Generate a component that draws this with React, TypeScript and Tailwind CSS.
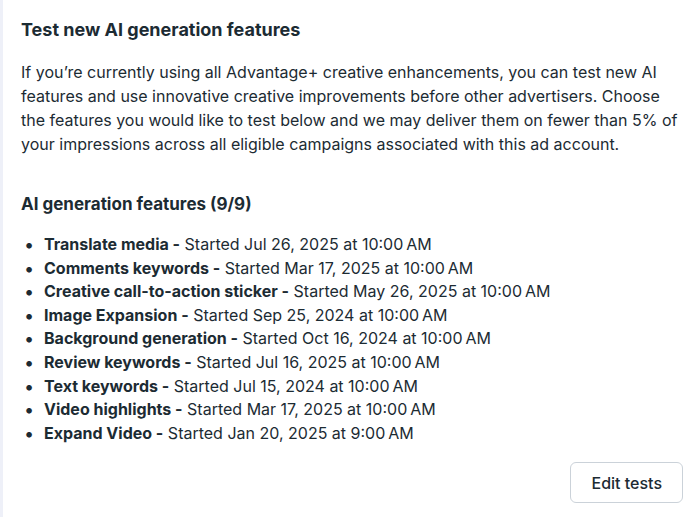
const features = [
  { name: 'Translate media', date: 'Jul 26, 2025 at 10:00\u202FAM' },
  { name: 'Comments keywords', date: 'Mar 17, 2025 at 10:00\u202FAM' },
  { name: 'Creative call-to-action sticker', date: 'May 26, 2025 at 10:00\u202FAM' },
  { name: 'Image Expansion', date: 'Sep 25, 2024 at 10:00\u202FAM' },
  { name: 'Background generation', date: 'Oct 16, 2024 at 10:00\u202FAM' },
  { name: 'Review keywords', date: 'Jul 16, 2025 at 10:00\u202FAM' },
  { name: 'Text keywords', date: 'Jul 15, 2024 at 10:00\u202FAM' },
  { name: 'Video highlights', date: 'Mar 17, 2025 at 10:00\u202FAM' },
  { name: 'Expand Video', date: 'Jan 20, 2025 at 9:00\u202FAM' },
]

export default function App() {
  return (
    <div className="flex min-h-[517px] w-[700px] bg-white text-[#1c2b33]" style={{ fontFamily: 'Inter, "Noto Sans", sans-serif' }}>
      <div className="w-[3px] shrink-0 bg-[#eef0f8]" />
      <div className="flex-1 pl-[18px] pr-[17px] pt-[18px]">
        <h2 className="text-[18px] font-bold leading-6">Test new AI generation features</h2>
        <p className="mt-[18px] text-[16px] leading-6">
          If you’re currently using all Advantage+ creative enhancements, you can test new AI features and use
          innovative creative improvements before other advertisers. Choose the features you would like to test below
          and we may deliver them on fewer than 5% of your impressions across all eligible campaigns associated with
          this ad account.
        </p>

        <h3 className="mt-[36px] text-[17px] font-bold leading-6">AI generation features (9/9)</h3>
        <ul className="mt-[17px] text-[16px] leading-[23.6px]">
          {features.map((f) => (
            <li key={f.name} className="flex items-center">
              <span className="w-[23px] pl-[3px] text-[18px]">•</span>
              <span>
                <span className="font-bold">{f.name} -</span> Started {f.date}
              </span>
            </li>
          ))}
        </ul>

        <div className="mt-[17px] flex justify-end">
          <button className="h-[41px] rounded-md border border-[#cbd2d9] px-[20px] text-[16px] font-medium">
            Edit tests
          </button>
        </div>
      </div>
    </div>
  )
}
